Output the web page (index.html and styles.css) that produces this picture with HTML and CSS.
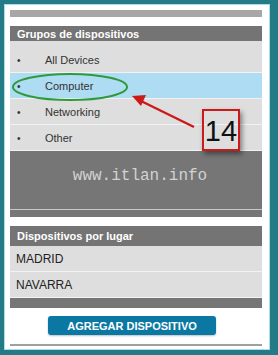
FILE: index.html
```html
<!DOCTYPE html>
<html lang="es">
<head>
    <meta charset="UTF-8">
    <title>Grupos de dispositivos</title>
    <link rel="stylesheet" href="styles.css">
</head>
<body>
    <div class="frame">
        <div class="panel">
            <div class="top-bar"></div>
            <div class="spacer"></div>

            <!-- Grupos -->
            <div class="section-title first">Grupos de dispositivos</div>
            <ul class="group-list">
                <li><span class="bullet">•</span>All Devices</li>
                <li class="selected"><span class="bullet">•</span>Computer</li>
                <li><span class="bullet">•</span>Networking</li>
                <li><span class="bullet">•</span>Other</li>
            </ul>
            <div class="watermark">
                <span>www.itlan.info</span>
            </div>
            <div class="watermark-foot"></div>
            <div class="spacer"></div>

            <!-- Lugares -->
            <div class="section-title">Dispositivos por lugar</div>
            <ul class="place-list">
                <li>MADRID</li>
                <li>NAVARRA</li>
            </ul>
            <div class="bottom-bar"></div>

            <div class="actions">
                <button class="add-btn">AGREGAR DISPOSITIVO</button>
            </div>

            <!-- annotation over the list -->
            <svg class="callout" width="252" height="160" viewBox="0 0 252 160">
                <ellipse cx="60" cy="77" rx="57" ry="13" fill="none" stroke="#2f9a3c" stroke-width="2"/>
                <line x1="184" y1="117" x2="131" y2="91" stroke="#cc1a1a" stroke-width="2.5"/>
                <polygon points="122,86 136,85 131,96" fill="#cc1a1a"/>
            </svg>
            <div class="tag">14</div>
        </div>
    </div>
</body>
</html>
```

FILE: styles.css
```css
* {
    margin: 0;
    padding: 0;
    box-sizing: border-box;
    font-family: 'Liberation Sans', Arial, sans-serif;
}

body {
    background-color: #247b88;
    width: 278px;
    height: 355px;
    overflow: hidden;
}

.frame {
    margin: 4px 8px 0 4px;
    height: 346px;
    background-color: #ffffff;
    border: 1px solid #a9dbe8;
    padding: 5px 7px 3px 5px;
}

.panel {
    position: relative;
    background-color: #ffffff;
    border-bottom: 2px solid #a0a0a0;
    height: 336px;
}

.top-bar {
    height: 7px;
    background-color: #a7a7a7;
}

.spacer {
    height: 9px;
    background-color: #ffffff;
}

.section-title {
    background-color: #747474;
    color: #ffffff;
    font-size: 11px;
    font-weight: bold;
    height: 20px;
    line-height: 20px;
    padding-left: 7px;
}

.section-title.first {
    height: 15px;
    line-height: 17px;
}

.group-list,
.place-list {
    list-style: none;
    background-color: #dedede;
}

.group-list {
    padding-top: 6px;
}

.group-list li,
.place-list li {
    height: 26px;
    line-height: 26px;
    font-size: 11px;
    color: #333333;
    border-bottom: 1px solid #f2f2f2;
}

.group-list li {
    padding-left: 7px;
}

.place-list li {
    padding-left: 6px;
    font-size: 12px;
    color: #222222;
}

.group-list li.selected {
    background-color: #aedcf3;
}

.bullet {
    display: inline-block;
    width: 28px;
    font-size: 10px;
}

.watermark {
    height: 59px;
    background-color: #767676;
    border-bottom: 1px solid #c8c8c8;
    display: flex;
    align-items: center;
    justify-content: center;
}

.watermark span {
    font-family: 'Liberation Mono', 'Courier New', monospace;
    font-size: 16px;
    color: #d2d2d2;
    margin-top: -9px;
    margin-left: 8px;
}

.watermark-foot {
    height: 7px;
    background-color: #767676;
}

.bottom-bar {
    height: 10px;
    background-color: #767676;
}

.actions {
    display: flex;
    justify-content: center;
    padding-top: 8px;
    padding-right: 8px;
}

.add-btn {
    width: 168px;
    height: 19px;
    background-color: #0b78a3;
    color: #ffffff;
    border: none;
    border-radius: 3px;
    font-size: 11px;
    font-weight: bold;
    box-shadow: 0 1px 2px rgba(0, 0, 0, 0.25);
}

.callout {
    position: absolute;
    left: 0;
    top: 0;
}

.tag {
    position: absolute;
    left: 192px;
    top: 99px;
    width: 38px;
    height: 42px;
    border: 2px solid #cc1a1a;
    box-shadow: 2px 3px 5px rgba(0, 0, 0, 0.45);
    font-size: 29px;
    line-height: 40px;
    text-align: center;
    color: #111111;
}
```
